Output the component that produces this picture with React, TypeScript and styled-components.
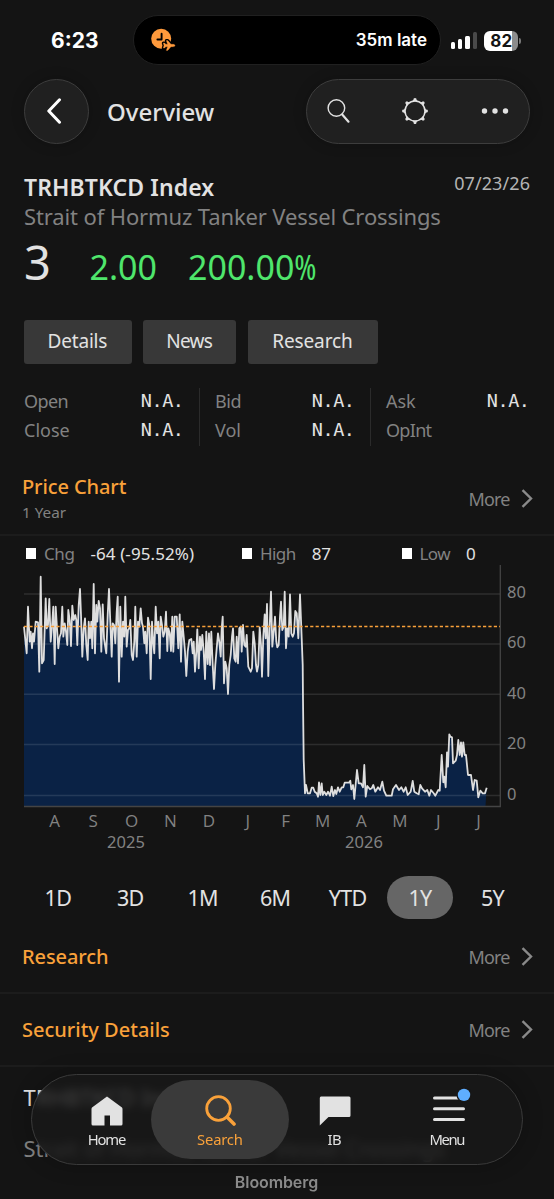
import React from "react";
import styled, { createGlobalStyle } from "styled-components";

const GlobalStyle = createGlobalStyle`
  * { box-sizing: border-box; }
  body { margin: 0; background: #141414; }
  button { font: inherit; border: 0; padding: 0; background: none; color: inherit; }
`;

const Screen = styled.div`
  position: relative;
  width: 554px;
  height: 1199px;
  overflow: hidden;
  background: #141414;
  color: #e2e2e2;
  font-family: "Noto Sans", "Open Sans", sans-serif;
`;

const Label = styled.span<{ $size: number; $color?: string; $weight?: number; $track?: number }>`
  font-size: ${(p) => p.$size}px;
  line-height: 1;
  font-weight: ${(p) => p.$weight ?? 400};
  letter-spacing: ${(p) => p.$track ?? 0}px;
  margin-right: ${(p) => -(p.$track ?? 0)}px;
  color: ${(p) => p.$color ?? "#e2e2e2"};
  white-space: nowrap;
`;
const NarrowSign = styled.span`
  font-family: "Open Sans", "Noto Sans", sans-serif;
  font-stretch: 75%;
  letter-spacing: -1px;
`;
const MonoValue = styled(Label)`
  font-family: "DejaVu Sans Mono", monospace;
`;

const StatusBar = styled.div`
  display: flex;
  align-items: center;
  height: 79px;
  padding: 2px 32px 0 51px;
  font-family: Inter, sans-serif;
  color: #fff;
`;
const Clock = styled.span`
  width: 82px;
  font-size: 21px;
  font-weight: 700;
  letter-spacing: 0;
`;
const Island = styled.div`
  display: flex;
  align-items: center;
  justify-content: space-between;
  width: 308px;
  height: 50px;
  margin-top: -1px;
  padding: 0 13px 0 17px;
  border: 1.5px solid #202020;
  border-radius: 26px;
  background: #000;
  font-size: 17px;
  font-weight: 600;
`;
const Signal = styled.div`
  display: flex;
  align-items: flex-end;
  gap: 3px;
  margin: -2px 0 0 10px;
  height: 18px;
`;
const Bar = styled.i<{ $h: number; $off?: boolean }>`
  width: 4.2px;
  height: ${(p) => p.$h}px;
  border-radius: 1.5px;
  background: ${(p) => (p.$off ? "#4a4a4a" : "#fff")};
`;
const Battery = styled.div`
  margin-left: 7.5px;
  width: 34px;
  height: 20px;
  border-radius: 6px;
  background: linear-gradient(90deg, #fff 82%, #8c8c8c 82%);
  color: #141414;
  font-size: 17px;
  font-weight: 700;
  line-height: 20px;
  text-align: center;
`;
const BatteryTip = styled.i`
  width: 2px;
  height: 6px;
  margin-left: 1px;
  border-radius: 0 2px 2px 0;
  background: #777;
`;

const Header = styled.header`
  display: flex;
  align-items: center;
  height: 64px;
  padding: 0 24px;
`;
const Glass = styled.div`
  border: 1.2px solid #3d3d3d;
  background: #202020;
  box-shadow: 0 0 14px rgba(0, 0, 0, 0.2);
`;
const BackButton = styled(Glass)`
  display: grid;
  place-items: center;
  width: 65px;
  height: 65px;
  border-radius: 50%;
`;
const HeaderTitle = styled.div`
  flex: 1;
  padding: 2px 0 0 18px;
  display: flex;
`;
const ActionPill = styled(Glass)`
  display: flex;
  align-items: center;
  justify-content: space-between;
  width: 224px;
  height: 65px;
  padding: 0 20px 0 20px;
  border-radius: 33px;
`;

const Quote = styled.section`
  height: 177px;
  padding: 33px 24px 0;
`;
const QuoteTop = styled.div`
  display: flex;
  align-items: flex-start;
  justify-content: space-between;
  height: 29px;
`;
const DateLabel = styled(Label)`
  margin-top: -2px;
`;
const Prices = styled.div`
  display: grid;
  grid-template-columns: 65.5px 98.5px auto;
  align-items: baseline;
  padding-top: 9px;
`;

const Chips = styled.div`
  display: flex;
  gap: 11.5px;
  padding-left: 23.5px;
`;
const Chip = styled.button<{ $w: number }>`
  display: grid;
  place-items: center;
  width: ${(p) => p.$w}px;
  height: 44px;
  padding-bottom: 1px;
  border-radius: 3px;
  background: #383838;
`;

const Stats = styled.div`
  display: grid;
  grid-template-columns: 175px 171px 1fr;
  margin-top: 24px;
  height: 58px;
  padding: 0 24px;
`;
const StatColumn = styled.div<{ $first?: boolean; $last?: boolean }>`
  display: flex;
  flex-direction: column;
  gap: 1.5px;
  padding: 0 ${(p) => (p.$last ? 0 : 15)}px 0 ${(p) => (p.$first ? 0 : 15)}px;
  border-left: ${(p) => (p.$first ? "0" : "1px solid #2b2b2b")};
`;
const StatRow = styled.div`
  display: flex;
  align-items: center;
  justify-content: space-between;
  height: 28px;
  padding-bottom: 2.5px;
`;

const SectionHeader = styled.section<{ $h: number; $pt?: number }>`
  display: flex;
  align-items: center;
  justify-content: space-between;
  height: ${(p) => p.$h}px;
  padding: ${(p) => p.$pt ?? 0}px 21.5px 0 22px;
  border-bottom: 2px solid #1c1c1c;
`;
const TitleStack = styled.div`
  display: flex;
  flex-direction: column;
  align-items: flex-start;
  gap: 8px;
`;
const MoreLink = styled.div`
  display: flex;
  align-items: center;
  gap: 10px;
`;

const Legend = styled.div`
  display: grid;
  grid-template-columns: 216px 159.5px 1fr;
  height: 29px;
  padding: 6px 0 0 26px;
`;
const LegendItem = styled.div`
  display: flex;
  align-items: center;
  height: 22px;
  gap: 8px;
`;
const Swatch = styled.i`
  width: 10px;
  height: 11px;
  background: #fff;
`;
const LegendValue = styled.div`
  margin-left: 7.5px;
  display: flex;
`;

const Ranges = styled.div`
  display: grid;
  grid-template-columns: repeat(7, 1fr);
  justify-items: center;
  height: 43px;
  padding: 0 25px 0 22px;
`;
const Range = styled.button<{ $on?: boolean }>`
  display: grid;
  place-items: center;
  width: 66px;
  height: 43px;
  padding-top: 1px;
  border-radius: 22px;
  background: ${(p) => (p.$on ? "#666" : "transparent")};
`;

const Details = styled.section`
  display: flex;
  flex-direction: column;
  gap: 29px;
  padding: 19px 23.5px 0;
`;

const TabBar = styled.nav`
  position: absolute;
  left: 31px;
  top: 1074px;
  display: flex;
  align-items: center;
  width: 492px;
  height: 91px;
  padding-left: 31px;
  border: 1.2px solid #3a3a3a;
  border-radius: 46px;
  background: rgba(24, 24, 24, 0.78);
  backdrop-filter: blur(4px);
  box-shadow: 0 0 20px rgba(0, 0, 0, 0.25);
`;
const Tab = styled.div<{ $on?: boolean; $w: number }>`
  position: relative;
  display: flex;
  flex-direction: column;
  align-items: center;
  width: ${(p) => p.$w}px;
  height: 79px;
  padding-top: 15px;
  gap: 5px;
  border-radius: 40px;
  background: ${(p) => (p.$on ? "#3a3a3a" : "transparent")};
`;
const Watermark = styled.div`
  position: absolute;
  top: 1174px;
  left: 0;
  width: 553px;
  display: flex;
  justify-content: center;
  font-family: Inter, sans-serif;
`;

const ORANGE = "#f9a13a";
const GREY = "#828282";

/* Each run of samples is stored in thirds of a pixel, offset by its own origin. */
const RUNS: { x: number; y: number; d: string }[] = [
  { x: 14, y: 0, d: "30,185 38,265 42,125 47,230 50,200 54,250 57,205 60,230 65,170 72,172 76,320 80,35 84,295 89,285 95,100 98,190 102,180 106,102 110,230 114,185 118,125 122,297 125,125 129,190 133,250 137,215 141,205 145,125 148,215 152,175 156,200 160,240 163,135 167,165 171,243 175,122 179,165 184,150 187,165 190,240 194,120 198,72 201,150 205,275 209,190 213,160 217,240 221,285 224,170 228,220 232,170 235,250 239,57 243,265 247,120 250,170 254,108 258,130 262,260 266,118 270,220 273,240 277,265 281,150 285,72 289,170 293,275 296,175 300,180 304,235 308,140 311,95 315,350 319,125 323,275 327,170 331,215 334,95 338,245 342,195 346,190 349,165 353,270 357,285 361,230 364,125 368,275 372,170 376,185 380,130 384,175 387,185 391,235 394,200 398,265 402,158 406,180 410,342 414,170 418,235 421,265 425,125 429,205 433,170 437,280 440,155 444,180" },
  { x: 150, y: 0, d: "40,215 44,200 48,140 52,258 55,190 59,205 63,258 67,155 70,260 74,155 80,155 85,250 89,148 93,290 97,170 101,215 105,260 109,333 113,260 118,225 124,222 128,265 131,230 135,320 139,260 142,193 146,310 150,215 153,255 157,210 161,260 165,342 169,200 173,297 177,205 180,300 184,200 188,300 192,372 196,300 200,250 204,205 208,230 212,275 215,190 218,155 222,355 226,290 230,310 234,387 238,300 242,270 246,215 249,190 253,280 257,290 260,215 264,295 268,190 272,185 275,260 279,180 283,240 287,245 290,210 295,305 302,320 306,310 310,200 314,235 318,300 321,320 325,300 329,187 333,240 336,335 340,215 344,148 347,220 351,117 355,333 359,185 363,80 367,245 371,200 375,155 379,230 382,247 386,240 390,155 393,110 397,195 401,185 404,80 408,250 412,190 416,215 420,88 424,205 428,215 432,205 436,138 440,145 445,220 450,88 455,220 458,300" },
  { x: 290, y: 135, d: "39,0 41,180 45,280 48,255 53,280 60,280 65,263 70,263 74,275 80,280 84,290 87,247 91,285 95,250 98,285 103,275 109,285 114,275 120,287 125,260 130,288 135,270 139,282 144,262 149,275 155,262 160,262 164,248 177,248 181,242 184,268 189,255 193,297 201,210 206,250 213,250 219,262 223,195 227,290 232,258 240,268 245,265 250,255 256,275 264,262 270,270 277,245 282,272 289,287 305,287 309,268 318,255 327,270 334,262 341,275 347,262 353,285 362,275 368,243 373,275 380,280 386,283 391,255 396,265 405,275 412,270 418,287 423,270 431,280 436,287 445,270 449,272 455,165 460,247 463,230 467,262 471,157 474,200 478,103 481,110 486,112 489,190 497,182 501,165 505,120 509,165 513,127 516,170 520,127 524,165 528,165 534,225 543,225 549,270 554,240 560,242 565,292 571,272 578,280 585,280 590,263" },
];
const LINE = RUNS.flatMap((run) =>
  run.d.split(" ").map((pair) => {
    const [x, y] = pair.split(",").map(Number);
    return `${(run.x + x / 3).toFixed(1)},${(run.y + y / 3).toFixed(1)}`;
  }),
).join(" ");

const TICKS = [
  { v: "80", y: 29 },
  { v: "60", y: 79 },
  { v: "40", y: 129.3 },
  { v: "20", y: 179.5 },
  { v: "0", y: 230.5 },
];
const MONTHS: [string, number][] = [
  ["A", 54.7], ["S", 93.2], ["O", 131.7], ["N", 170.3], ["D", 209], ["J", 247.8],
  ["F", 285.7], ["M", 322.7], ["A", 361.3], ["M", 400], ["J", 438.3], ["J", 478.5],
];

const ChartSvg = styled.svg`
  display: block;
  width: 554px;
  height: 311px;
`;
const AxisText = styled.text`
  fill: ${GREY};
  font-size: 16.5px;
`;
const MonthText = styled(AxisText)`
  font-family: "Open Sans", "Noto Sans", sans-serif;
  font-stretch: 92%;
  font-size: 17px;
`;

function PriceChart() {
  return (
    <ChartSvg viewBox="0 0 554 311">
      <polygon points={`24,241 ${LINE} 485.5,241`} fill="#0a2245" />
      {TICKS.map((t) => (
        <line key={t.v} x1="24" x2="500" y1={t.y} y2={t.y} stroke="#fff" strokeOpacity="0.11" strokeWidth="1.4" />
      ))}
      <path d="M24 241.5H500.3V0" fill="none" stroke="#444" strokeWidth="1.3" />
      <polyline points={LINE} fill="none" stroke="#dedede" strokeWidth="1.8" strokeLinejoin="round" />
      <line x1="24" x2="500" y1="61.5" y2="61.5" stroke={ORANGE} strokeWidth="1.4" strokeDasharray="3.2 2.2" />
      {TICKS.map((t) => (
        <AxisText key={t.v} x="507" y={t.y + 4.3}>{t.v}</AxisText>
      ))}
      {MONTHS.map(([m, x]) => (
        <MonthText key={x} x={x} y="261.5" textAnchor="middle">{m}</MonthText>
      ))}
      <AxisText x="126" y="283" textAnchor="middle">2025</AxisText>
      <AxisText x="364" y="283" textAnchor="middle">2026</AxisText>
    </ChartSvg>
  );
}

const PLANE =
  "M24 17.500C24 16.700 22.800 16.300 21.800 16.300H20L16.700 12.600H15.300L16.600 16.300H14.800L13.600 15H12.300L13 17.500L12.300 20H13.600L14.800 18.700H16.600L15.300 22.400H16.700L20 18.700H21.800C22.800 18.700 24 18.300 24 17.500Z";
const FlightIcon = () => (
  <svg width="25" height="24" viewBox="0 0 25 24">
    <circle cx="10.200" cy="10.800" r="10" fill="#ff9a3c" />
    <path d="M10.600 5.700v5.800H6.400" fill="none" stroke="#000" strokeWidth="1.900" strokeLinecap="round" strokeLinejoin="round" />
    <path d={PLANE} fill="#000" stroke="#000" strokeWidth="3" strokeLinejoin="round" />
    <path d={PLANE} fill="#ff9a3c" stroke="#ff9a3c" strokeWidth="0.300" />
  </svg>
);
const Chevron = () => (
  <svg width="12" height="20" viewBox="0 0 12 20" fill="none" stroke="#8a8a8a" strokeWidth="2.400">
    <path d="M1.500 1.200L10 9.500l-8.500 8.300" />
  </svg>
);
const BackIcon = () => (
  <svg width="20" height="28" viewBox="0 0 20 28" fill="none" stroke="#fff" strokeWidth="3" strokeLinecap="round" strokeLinejoin="round">
    <path d="M12.500 2.800L1.800 14 12.500 25.200" />
  </svg>
);
const SearchThin = () => (
  <svg width="22" height="26" viewBox="0 0 22 26" fill="none" stroke="#e2e2e2" overflow="visible">
    <circle cx="9.400" cy="10" r="8.300" strokeWidth="1.400" />
    <path d="M15.200 16.500l6.300 7.200" strokeWidth="2.200" strokeLinecap="round" />
  </svg>
);
const GearIcon = () => (
  <svg width="28" height="28" viewBox="-14 -14 28 28">
    <circle r="10" fill="none" stroke="#e2e2e2" strokeWidth="1.500" />
    {[0, 45, 90, 135, 180, 225, 270, 315].map((a) => (
      <path key={a} transform={`rotate(${a})`} d="M-2.800 -9.800Q-1.300 -10.600 -1.300 -12.500Q0 -13.500 1.300 -12.500Q1.300 -10.600 2.800 -9.800Z" fill="#e2e2e2" />
    ))}
  </svg>
);
const DotsIcon = () => (
  <svg width="28" height="8" viewBox="0 0 28 8" fill="#e2e2e2">
    <circle cx="3.500" cy="4" r="2.700" />
    <circle cx="14" cy="4" r="2.700" />
    <circle cx="24.500" cy="4" r="2.700" />
  </svg>
);
const HomeIcon = () => (
  <svg width="32" height="32" viewBox="0 0 32 32">
    <path d="M16 1.500L31 12.500Q31.500 13 31.500 14V29Q31.500 30.500 30 30.500H19V20.500H13.500V30.500H2Q.5 30.500 .5 29V14Q.5 13 1 12.500Z" fill="#e2e2e2" />
  </svg>
);
const SearchBold = () => (
  <svg width="32" height="32" viewBox="-0.500 0 32 32" fill="none" stroke={ORANGE} strokeWidth="2.800">
    <circle cx="14" cy="13.500" r="11.800" />
    <path d="M22.500 22l7 7" strokeWidth="3.600" strokeLinecap="round" />
  </svg>
);
const ChatIcon = () => (
  <svg width="32" height="32" viewBox="0 0 32 32">
    <path d="M2 1.500H30Q31.500 1.500 31.500 3V20.500Q31.500 22 30 22H9.500L.8 30.500V3Q.8 1.500 2 1.500Z" fill="#e2e2e2" />
  </svg>
);
const MenuIcon = () => (
  <svg width="38" height="32" viewBox="-2.500 0 38 32" fill="none" stroke="#e2e2e2" strokeWidth="3" strokeLinecap="round" overflow="visible">
    <path d="M3 3H32M3 13.700H32M3 24.400H32" />
    <circle cx="32.500" cy="-.1" r="7.500" fill="#181818" stroke="none" />
    <circle cx="32.500" cy="-.1" r="6.200" fill="#5faeff" stroke="none" />
  </svg>
);

const More = () => (
  <MoreLink>
    <Label $size={18} $color={GREY} $track={-0.8}>More</Label>
    <Chevron />
  </MoreLink>
);
const Stat = ({ name, value, track }: { name: string; value?: string; track?: number }) => (
  <StatRow>
    <Label $size={18} $color={GREY} $track={track}>{name}</Label>
    {value && <MonoValue $size={18.5} $track={-0.4}>{value}</MonoValue>}
  </StatRow>
);
const LegendEntry = ({ name, value, track, valueTrack }: { name: string; value: string; track: number; valueTrack?: number }) => (
  <LegendItem>
    <Swatch />
    <Label $size={17} $color={GREY} $track={track}>{name}</Label>
    <LegendValue><Label $size={17} $track={valueTrack}>{value}</Label></LegendValue>
  </LegendItem>
);

export default function App() {
  return (
    <Screen>
      <GlobalStyle />
      <StatusBar>
        <Clock>6:23</Clock>
        <Island>
          <FlightIcon />
          <span>35m late</span>
        </Island>
        <Signal>
          <Bar $h={7} />
          <Bar $h={10} />
          <Bar $h={13} />
          <Bar $h={17} $off />
        </Signal>
        <Battery>82</Battery>
        <BatteryTip />
      </StatusBar>

      <Header>
        <BackButton><BackIcon /></BackButton>
        <HeaderTitle><Label $size={24} $weight={500}>Overview</Label></HeaderTitle>
        <ActionPill><SearchThin /><GearIcon /><DotsIcon /></ActionPill>
      </Header>

      <Quote>
        <QuoteTop>
          <Label $size={23} $weight={600} $track={0.1}>TRHBTKCD Index</Label>
          <DateLabel $size={18} $color="#b4b4b4" $track={0.1}>07/23/26</DateLabel>
        </QuoteTop>
        <Label $size={22} $color={GREY} $track={-0.12}>Strait of Hormuz Tanker Vessel Crossings</Label>
        <Prices>
          <Label $size={47}>3</Label>
          <Label $size={34} $color="#4fe66c">2.00</Label>
          <Label $size={34} $color="#4fe66c">200.00<NarrowSign>%</NarrowSign></Label>
        </Prices>
      </Quote>

      <Chips>
        <Chip $w={108}><Label $size={19} $track={-0.2}>Details</Label></Chip>
        <Chip $w={93}><Label $size={19} $track={-0.7}>News</Label></Chip>
        <Chip $w={130}><Label $size={19} $track={-0.1}>Research</Label></Chip>
      </Chips>

      <Stats>
        <StatColumn $first><Stat name="Open" value="N.A." track={-0.6} /><Stat name="Close" value="N.A." /></StatColumn>
        <StatColumn><Stat name="Bid" value="N.A." track={-0.4} /><Stat name="Vol" value="N.A." /></StatColumn>
        <StatColumn $last><Stat name="Ask" value="N.A." /><Stat name="OpInt" track={-0.7} /></StatColumn>
      </Stats>

      <SectionHeader $h={90} $pt={18}>
        <TitleStack>
          <Label $size={20} $weight={500} $color={ORANGE} $track={-0.1}>Price Chart</Label>
          <Label $size={15.3} $color={GREY}>1 Year</Label>
        </TitleStack>
        <More />
      </SectionHeader>

      <Legend>
        <LegendEntry name="Chg" value="-64 (-95.52%)" track={-0.4} valueTrack={0.1} />
        <LegendEntry name="High" value="87" track={-0.6} />
        <LegendEntry name="Low" value="0" track={-0.6} />
      </Legend>
      <PriceChart />

      <Ranges>
        {["1D", "3D", "1M", "6M", "YTD", "1Y", "5Y"].map((r) => (
          <Range key={r} $on={r === "1Y"}><Label $size={21.5} $track={-0.7}>{r}</Label></Range>
        ))}
      </Ranges>

      <SectionHeader $h={75} $pt={2}>
        <Label $size={20} $weight={500} $color={ORANGE} $track={-0.1}>Research</Label>
        <More />
      </SectionHeader>
      <SectionHeader $h={73} $pt={1}>
        <Label $size={20} $weight={500} $color={ORANGE}>Security Details</Label>
        <More />
      </SectionHeader>

      <Details>
        <Label $size={22}>TRHBTKCD Index</Label>
        <Label $size={22} $color={GREY}>Strait of Hormuz Tanker Vessel Crossings</Label>
      </Details>

      <TabBar>
        <Tab $w={88}><HomeIcon /><Label $size={14.8} $track={-1.2}>Home</Label></Tab>
        <Tab $w={138} $on><SearchBold /><Label $size={14.8} $color={ORANGE} $track={-0.2}>Search</Label></Tab>
        <Tab $w={91}><ChatIcon /><Label $size={14.8} $track={-0.5}>IB</Label></Tab>
        <Tab $w={135}><MenuIcon /><Label $size={14.8} $track={-1.4}>Menu</Label></Tab>
      </TabBar>
      <Watermark><Label $size={16} $weight={600} $color="#8a8a8a" $track={-0.1}>Bloomberg</Label></Watermark>
    </Screen>
  );
}
